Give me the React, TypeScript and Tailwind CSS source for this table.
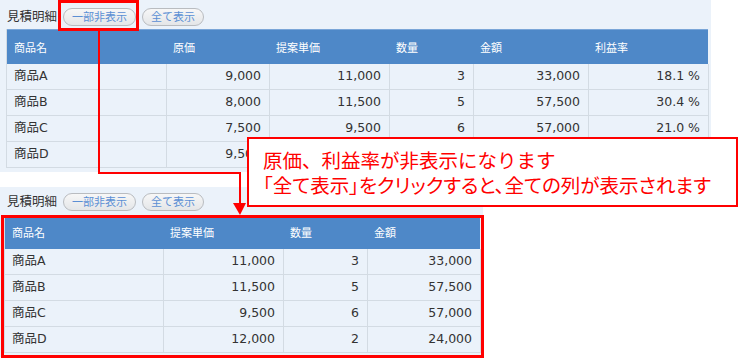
import React from 'react';

type Row = { name: string; cost?: string; price: string; qty: string; amount: string; rate?: string };

const rows: Row[] = [
  { name: '商品A', cost: '9,000', price: '11,000', qty: '3', amount: '33,000', rate: '18.1 %' },
  { name: '商品B', cost: '8,000', price: '11,500', qty: '5', amount: '57,500', rate: '30.4 %' },
  { name: '商品C', cost: '7,500', price: '9,500', qty: '6', amount: '57,000', rate: '21.0 %' },
  { name: '商品D', cost: '9,500', price: '12,000', qty: '2', amount: '24,000', rate: '20.8 %' },
];

const font = "font-['DejaVu_Sans','Noto_Sans_CJK_JP',sans-serif]";

function PillButton({ label, wide }: { label: string; wide?: boolean }) {
  return (
    <button
      className={`h-[18px] ${wide ? 'w-[73px]' : 'w-[62px]'} rounded-full border border-[#b9bcc0] bg-gradient-to-b from-[#f7f7f7] to-[#e4e6e8] text-[11px] leading-none text-[#5b8fd4] font-['Noto_Sans_CJK_JP',sans-serif]`}
    >
      {label}
    </button>
  );
}

function Toolbar({ top }: { top: string }) {
  return (
    <div className={`flex items-center h-[29px] ${top} pl-[7px]`}>
      <span className="text-[12.5px] text-[#333] font-['Noto_Sans_CJK_JP',sans-serif]">見積明細</span>
      <div className="flex gap-[6px] ml-[6px]">
        <PillButton label="一部非表示" wide />
        <PillButton label="全て表示" />
      </div>
    </div>
  );
}

function HeadCell({ label }: { label: string }) {
  return (
    <div className="flex items-center pl-[6px] first:pl-[7px] text-[11px] text-white font-['Noto_Sans_CJK_JP',sans-serif]">
      {label}
    </div>
  );
}

function Cell({ children, num }: { children: React.ReactNode; num?: boolean }) {
  return (
    <div
      className={`flex items-center h-[26px] border-r border-b border-[#d3dbe3] text-[12.5px] text-[#333] ${
        num ? 'justify-end pr-[8px]' : 'pl-[7px]'
      }`}
    >
      {children}
    </div>
  );
}

function FullTable() {
  return (
    <div className="ml-[6px] w-[702px] border-l border-[#d3dbe3]">
      <div className="grid grid-cols-[160px_103px_120px_84px_115px_120px] h-[35px] bg-[#4e88c8] border-t border-[#7aa6d8]">
        {['商品名', '原価', '提案単価', '数量', '金額', '利益率'].map((h) => (
          <HeadCell key={h} label={h} />
        ))}
      </div>
      {rows.map((r) => (
        <div key={r.name} className="grid grid-cols-[160px_103px_120px_84px_115px_120px]">
          <Cell>{r.name}</Cell>
          <Cell num>{r.cost}</Cell>
          <Cell num>{r.price}</Cell>
          <Cell num>{r.qty}</Cell>
          <Cell num>{r.amount}</Cell>
          <Cell num>{r.rate}</Cell>
        </div>
      ))}
    </div>
  );
}

function PartialTable() {
  return (
    <div className="ml-[4px] w-[476px] border-l border-[#d3dbe3]">
      <div className="grid grid-cols-[159px_120px_84px_113px] h-[33px] bg-[#4e88c8]">
        {['商品名', '提案単価', '数量', '金額'].map((h) => (
          <HeadCell key={h} label={h} />
        ))}
      </div>
      {rows.map((r) => (
        <div key={r.name} className="grid grid-cols-[159px_120px_84px_113px]">
          <Cell>{r.name}</Cell>
          <Cell num>{r.price}</Cell>
          <Cell num>{r.qty}</Cell>
          <Cell num>{r.amount}</Cell>
        </div>
      ))}
    </div>
  );
}

export default function App() {
  return (
    <div className={`relative w-[738px] h-[358px] overflow-hidden bg-white ${font}`}>
      {/* Before: all columns */}
      <div className="w-[711px] bg-[#ebf2fa] pb-[4px]">
        <Toolbar top="pt-[4px]" />
        <FullTable />
      </div>

      {/* After: cost / margin hidden */}
      <div className="mt-[15px] w-[483px] h-[170px] bg-[#ebf2fa]">
        <Toolbar top="pt-0" />
        <PartialTable />
      </div>

      {/* Annotations */}
      <div className="absolute left-[58px] top-0 w-[81px] h-[31px] border-[3px] border-[#ff0000]" />
      <svg className="absolute left-0 top-0" width="738" height="358">
        <polyline points="99,31 99,173 240,173 240,205" fill="none" stroke="#ff0000" strokeWidth="2" />
        <polygon points="233,203 246,203 240,215" fill="#ff0000" />
      </svg>
      <div className="absolute left-[1px] top-[215px] w-[483px] h-[143px] border-[3px] border-[#ff0000]" />
      <div className="absolute left-[247px] top-[137px] w-[491px] h-[70px] border-2 border-[#ff0000] bg-white pl-[14px] pt-[8px] text-[19.5px] leading-[25px] text-[#ff0000] font-['Noto_Sans_CJK_JP',sans-serif]">
        <div>原価、利益率が非表示になります</div>
        <div className="[font-feature-settings:'palt']">「全て表示」をクリックすると、全ての列が表示されます</div>
      </div>
    </div>
  );
}
